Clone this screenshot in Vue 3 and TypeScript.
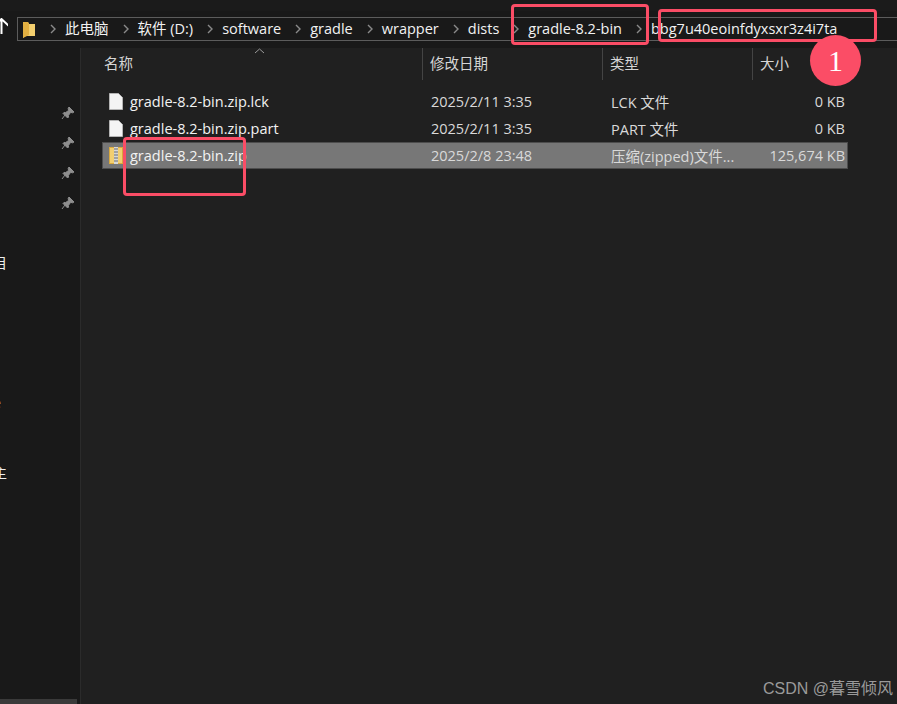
<script setup lang="ts">
const crumbs = ['此电脑', '软件 (D:)', 'software', 'gradle', 'wrapper', 'dists', 'gradle-8.2-bin', 'bbg7u40eoinfdyxsxr3z4i7ta']

const columns = [
  { label: '名称', cls: 'col-name' },
  { label: '修改日期', cls: 'col-date' },
  { label: '类型', cls: 'col-type' },
  { label: '大小', cls: 'col-size' },
]

const files = [
  { name: 'gradle-8.2-bin.zip.lck', date: '2025/2/11 3:35', type: 'LCK 文件', size: '0 KB', zip: false },
  { name: 'gradle-8.2-bin.zip.part', date: '2025/2/11 3:35', type: 'PART 文件', size: '0 KB', zip: false },
  { name: 'gradle-8.2-bin.zip', date: '2025/2/8 23:48', type: '压缩(zipped)文件...', size: '125,674 KB', zip: true },
]

const clipped = [
  { text: '目', gap: 81 },
  { text: ':', gap: 80 },
  { text: 'e', gap: 20 },
  { text: '主', gap: 50 },
  { text: ')', gap: 190 },
]
</script>

<template>
  <div class="page">
    <div class="topbar">
      <svg class="up" width="8" height="16" viewBox="0 0 8 16">
        <path d="M-6 8 L1.5 1 L9 8 M1.5 1 V16" fill="none" stroke="#fff" stroke-width="2" />
      </svg>
      <div class="address">
        <svg class="folder" width="13" height="17" viewBox="0 0 13 17">
          <path d="M0 1 H5 L6 3 H12 V15 H2 L0 17 Z" fill="#f4cf6e" />
          <path d="M0 1 H5 L6 3 V14 L0 17 Z" fill="#e3b042" />
        </svg>
        <template v-for="c in crumbs" :key="c">
          <svg class="chev" width="6" height="10" viewBox="0 0 6 10">
            <path d="M1 1 L5 5 L1 9" fill="none" stroke="#8a8a8a" stroke-width="1.4" />
          </svg>
          <span class="crumb">{{ c }}</span>
        </template>
      </div>
    </div>

    <div class="body">
      <aside class="side">
        <div class="pins">
          <svg v-for="n in 4" :key="n" width="14" height="14" viewBox="0 0 14 14">
            <path d="M8 1 L13 6 L11.6 6.8 L9.6 6.4 L7.4 9.4 L7.6 11 L6.6 12 L2 7.4 L3 6.4 L4.6 6.6 L7.6 4.4 L7.2 2.4 Z M4 9 L1 13" fill="#8e8e8e" stroke="#8e8e8e" stroke-width="1" />
          </svg>
        </div>
        <div class="labels">
          <div v-for="l in clipped" :key="l.text" class="label" :style="{ marginTop: l.gap + 'px' }">{{ l.text }}</div>
        </div>
        <div class="side-scroll"></div>
      </aside>

      <main class="main">
        <div class="head">
          <div v-for="c in columns" :key="c.label" class="head-cell" :class="c.cls">{{ c.label }}</div>
          <svg class="sort" width="11" height="6" viewBox="0 0 11 6">
            <path d="M1 5 L5.5 1 L10 5" fill="none" stroke="#9a9a9a" stroke-width="1" />
          </svg>
        </div>
        <div class="rows">
          <div v-for="f in files" :key="f.name" class="row" :class="{ selected: f.zip }">
            <div class="cell cell-name">
              <svg v-if="!f.zip" width="14" height="17" viewBox="0 0 14 17">
                <path d="M0.5 0.5 H9.5 L13.5 4.5 V16.5 H0.5 Z" fill="#f4f4f4" stroke="#b4b4b4" />
              </svg>
              <svg v-else width="14" height="17" viewBox="0 0 14 17">
                <rect x="0.5" y="0.5" width="13" height="16" fill="#f3cf70" stroke="#d9a93e" />
                <rect x="5" y="0" width="4" height="17" fill="#d8d8d8" />
                <path d="M5 2 H9 M5 5 H9 M5 8 H9 M5 11 H9 M5 14 H9" stroke="#6a6a6a" stroke-width="1" />
              </svg>
              <span>{{ f.name }}</span>
            </div>
            <div class="cell cell-date">{{ f.date }}</div>
            <div class="cell cell-type">{{ f.type }}</div>
            <div class="cell cell-size">{{ f.size }}</div>
          </div>
        </div>
      </main>
    </div>

    <div class="mark mark-bin"></div>
    <div class="mark mark-hash"></div>
    <div class="mark mark-file"></div>
    <div class="badge">1</div>
    <div class="credit">CSDN @暮雪倾风</div>
  </div>
</template>

<style scoped>
.page {
  position: relative;
  width: 897px;
  height: 704px;
  overflow: hidden;
  background: #191919;
  color: #f2f2f2;
  font-family: "Open Sans", "Noto Sans CJK SC", sans-serif;
  font-size: 14.5px;
}

.topbar {
  height: 48px;
  box-sizing: border-box;
  padding-top: 11px;
  display: flex;
  align-items: flex-start;
  border-top: 0;
  background: linear-gradient(#1b1b1b 0 11px, #191919 11px);
}

.up {
  margin-top: 7px;
  flex: none;
}

.address {
  margin: 6px 0 0 9px;
  height: 22px;
  flex: 1;
  box-sizing: content-box;
  border: 1px solid #5c5c5c;
  border-right: 0;
  background: #191919;
  display: flex;
  align-items: center;
  white-space: nowrap;
  padding-left: 5px;
}

.folder {
  flex: none;
}

.chev {
  flex: none;
  margin: 0 9px 0 14px;
}

.crumb {
  line-height: 22px;
}

.body {
  display: flex;
  height: 656px;
}

.side {
  position: relative;
  width: 80px;
  flex: none;
  background: #191919;
  border-right: 1px solid #2b2b2b;
  overflow: hidden;
}

.pins {
  position: absolute;
  top: 58px;
  right: 5px;
  display: flex;
  flex-direction: column;
  gap: 16px;
}

.labels {
  padding-top: 124px;
}

.label {
  height: 20px;
  line-height: 20px;
  margin-left: -7px;
  color: #eee;
  font-size: 14px;
}

.side-scroll {
  position: absolute;
  left: 0;
  bottom: 0;
  width: 77px;
  height: 5px;
  background: #3a3a3a;
}

.main {
  flex: 1;
  background: #202020;
  min-width: 0;
}

.head {
  position: relative;
  height: 32px;
  display: grid;
  grid-template-columns: 342px 180px 150px 1fr;
}

.head-cell {
  height: 32px;
  line-height: 32px;
  padding-left: 7px;
  color: #d6d6d6;
  border-right: 1px solid #444;
  box-sizing: border-box;
}

.col-name {
  padding-left: 23px;
}

.col-size {
  border-right: 0;
}

.sort {
  position: absolute;
  left: 173px;
  top: 0;
}

.rows {
  padding: 8px 0 0 21px;
}

.row {
  width: 746px;
  height: 27px;
  box-sizing: border-box;
  display: grid;
  grid-template-columns: 321px 180px 150px 95px;
  align-items: center;
  border: 1px solid transparent;
}

.row.selected {
  background: #777;
  border-color: #4d4d4d;
}

.cell-name {
  display: flex;
  align-items: center;
  gap: 7px;
  padding-left: 6px;
}

.cell-date,
.cell-type,
.cell-size {
  color: #d9d9d9;
  padding-left: 7px;
  white-space: nowrap;
}

.cell-size {
  text-align: right;
  padding: 0 4px 0 0;
}

.mark {
  position: absolute;
  box-sizing: border-box;
  border: 3px solid #fb4d66;
  border-radius: 4px;
}

.mark-bin {
  left: 511px;
  top: 4px;
  width: 138px;
  height: 41px;
}

.mark-hash {
  left: 658px;
  top: 9px;
  width: 219px;
  height: 33px;
}

.mark-file {
  left: 123px;
  top: 137px;
  width: 123px;
  height: 59px;
}

.badge {
  position: absolute;
  left: 810px;
  top: 35px;
  width: 51px;
  height: 51px;
  border-radius: 50%;
  background: #fb4d66;
  color: #fff;
  font-family: "Liberation Serif", serif;
  font-size: 30px;
  line-height: 51px;
  text-align: center;
}

.credit {
  position: absolute;
  right: 4px;
  bottom: 6px;
  color: #9a9a9a;
  font-family: "Liberation Sans", "Noto Sans CJK SC", sans-serif;
  font-size: 16px;
  line-height: 18px;
}
</style>
